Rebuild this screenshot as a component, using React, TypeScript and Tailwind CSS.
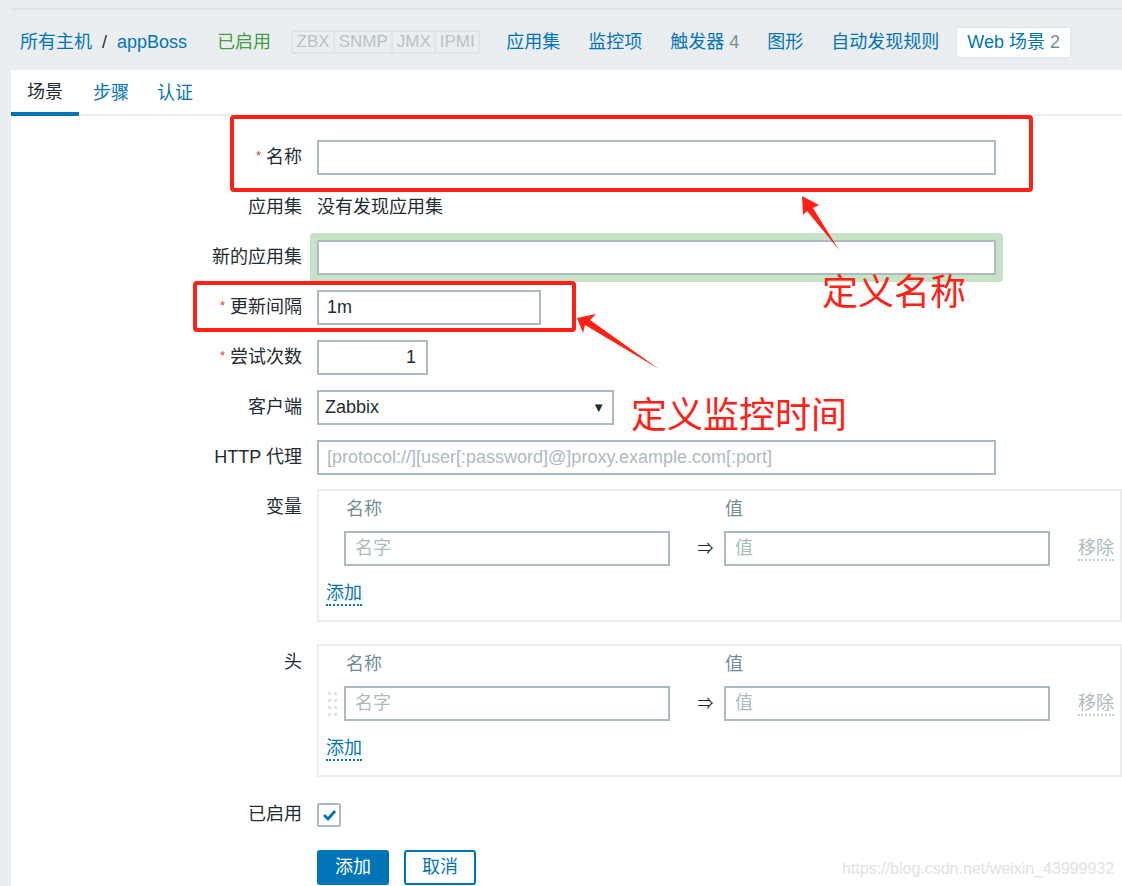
import React from 'react';

const FONT = "font-['Liberation_Sans','Noto_Sans_CJK_SC',sans-serif]";

function Label({ text, required }: { text: string; required?: boolean }) {
  return (
    <div className="w-[291px] shrink-0 flex justify-end items-center text-[#1f2c33]">
      {required && <span className="text-[#e33734] text-[13px] mr-[5px] -mt-[4px]">*</span>}
      <span>{text}</span>
    </div>
  );
}

function Row({ label, required, children, className = '' }: { label: string; required?: boolean; children: React.ReactNode; className?: string }) {
  return (
    <div className={`flex items-center h-[35px] gap-[15px] ${className}`}>
      <Label text={label} required={required} />
      {children}
    </div>
  );
}

function DragHandle() {
  return (
    <svg width="10" height="28" viewBox="0 0 10 28">
      {[0, 1, 2, 3].map((r) =>
        [0, 1].map((c) => <rect key={`${r}-${c}`} x={c * 6} y={r * 7 + 2} width="3" height="3" fill="#dfe4e7" />)
      )}
    </svg>
  );
}

function PairBox({ handle }: { handle?: boolean }) {
  return (
    <div className="w-[830px] border-2 border-[#ebeef0]">
      <div className="flex h-[36px] items-center pl-[25px] text-[#768d99]">
        <div className="w-[326px] pl-[2px]">名称</div>
        <div className="w-[54px]" />
        <div className="pl-[1px]">值</div>
      </div>
      <div className="flex h-[35px] items-center mt-[4px]">
        <div className="w-[25px] flex justify-center pl-[2px]">{handle && <DragHandle />}</div>
        <div className="w-[326px] h-[35px] border-2 border-[#acbbc2] flex items-center px-[9px] text-[#acbbc2]">名字</div>
        <div className="w-[54px] text-center pl-[17px] text-[#1f2c33] text-[16px]">⇒</div>
        <div className="w-[326px] h-[35px] border-2 border-[#acbbc2] flex items-center px-[9px] text-[#acbbc2]">值</div>
        <span className="ml-[28px] text-[#acbbc2] border-b-2 border-dotted border-[#c4cfd4] leading-[22px]">移除</span>
      </div>
      <div className="h-[30px] mt-[13px] mb-[11px] pl-[7px] flex items-center">
        <span className="text-[#0275b8] border-b-2 border-dotted border-[#0275b8] leading-[22px]">添加</span>
      </div>
    </div>
  );
}

export default function App() {
  return (
    <div className={`relative w-[1122px] h-[886px] overflow-hidden bg-[#ebeef0] text-[18px] ${FONT}`}>
      <div className="h-[8px]" />
      {/* host nav */}
      <div className="ml-[10px] border-t-2 border-[#dfe4e7] h-[62px] pt-[4px] flex items-center pl-[10px] text-[#0275b8] whitespace-nowrap">
        <span>所有主机</span>
        <span className="ml-[10px] text-[#1f2c33]">/</span>
        <span className="ml-[10px]">appBoss</span>
        <span className="ml-[30px] text-[#429e47]">已启用</span>
        <div className="ml-[20px] flex border-2 border-[#dfe4e7] rounded-[3px] text-[#b8c3c8] text-[17px] leading-[20px]">
          <span className="px-[3.5px] border-r-2 border-[#dfe4e7]">ZBX</span>
          <span className="px-[3.5px] border-r-2 border-[#dfe4e7]">SNMP</span>
          <span className="px-[3.5px] border-r-2 border-[#dfe4e7]">JMX</span>
          <span className="px-[3.5px]">IPMI</span>
        </div>
        <span className="ml-[26px]">应用集</span>
        <span className="ml-[28px]">监控项</span>
        <span className="ml-[28px]">触发器 <span className="text-[#768d99]">4</span></span>
        <span className="ml-[28px]">图形</span>
        <span className="ml-[28px]">自动发现规则</span>
        <div className="ml-[17px] h-[31px] px-[10px] flex items-center bg-white border border-[#dfe4e7] rounded-[2px]">
          Web 场景 <span className="ml-[5px] text-[#768d99]">2</span>
        </div>
      </div>

      {/* white panel */}
      <div className="ml-[11px] bg-white h-[816px]">
        <div className="flex h-[46px] border-b-2 border-[#ebeef0]">
          <div className="px-[16px] pt-[3px] flex items-center text-[#1f2c33] border-b-4 border-[#0275b8] -mb-[2px]">场景</div>
          <div className="px-[14px] pt-[3px] flex items-center text-[#0275b8]">步骤</div>
          <div className="px-[14px] pt-[3px] flex items-center text-[#0275b8]">认证</div>
        </div>

        <div className="pt-[24px] flex flex-col gap-[15px]">
          <Row label="名称" required>
            <div className="w-[679px] h-[35px] border-2 border-[#acbbc2]" />
          </Row>
          <Row label="应用集">
            <span className="text-[#1f2c33]">没有发现应用集</span>
          </Row>
          <Row label="新的应用集">
            <div className="w-[679px] h-[35px] border-2 border-[#acbbc2] shadow-[0_0_0_7px_#c6e3c8] rounded-[1px]" />
          </Row>
          <Row label="更新间隔" required>
            <div className="w-[224px] h-[35px] border-2 border-[#acbbc2] flex items-center px-[8px] text-[#1f2c33]">1m</div>
          </Row>
          <Row label="尝试次数" required>
            <div className="w-[111px] h-[35px] border-2 border-[#acbbc2] flex items-center justify-end px-[10px] text-[#1f2c33]">1</div>
          </Row>
          <Row label="客户端">
            <div className="w-[297px] h-[35px] border-2 border-[#acbbc2] flex items-center justify-between pl-[6px] pr-[7px] text-[#1f2c33]">
              <span>Zabbix</span>
              <span className="text-[13px]">▼</span>
            </div>
          </Row>
          <Row label="HTTP 代理">
            <div className="w-[679px] h-[35px] border-2 border-[#acbbc2] flex items-center px-[8px] text-[#acbbc2] whitespace-nowrap">
              [protocol://][user[:password]@]proxy.example.com[:port]
            </div>
          </Row>
        </div>

        <div className="flex gap-[15px] mt-[14px]">
          <div className="w-[291px] shrink-0 text-right pt-[7px] text-[#1f2c33] leading-[22px]">变量</div>
          <PairBox />
        </div>
        <div className="flex gap-[15px] mt-[22px]">
          <div className="w-[291px] shrink-0 text-right pt-[7px] text-[#1f2c33] leading-[22px]">头</div>
          <PairBox handle />
        </div>

        <div className="flex items-center gap-[15px] mt-[20px] h-[35px]">
          <Label text="已启用" />
          <div className="w-[24px] h-[24px] border-2 border-[#acbbc2] rounded-[2px] flex items-center justify-center">
            <svg width="15" height="12" viewBox="0 0 15 12">
              <path d="M2 6 L6 10 L13 2" stroke="#0275b8" strokeWidth="2.8" fill="none" />
            </svg>
          </div>
        </div>

        <div className="flex gap-[15px] mt-[18px] ml-[306px]">
          <div className="w-[72px] h-[35px] bg-[#0275b8] text-white rounded-[3px] flex items-center justify-center">添加</div>
          <div className="w-[72px] h-[35px] border-2 border-[#0275b8] text-[#0275b8] rounded-[3px] flex items-center justify-center">取消</div>
        </div>
      </div>

      {/* annotations */}
      <div className="absolute left-[230px] top-[115px] w-[803px] h-[77px] border-[4px] border-[#ff2016] rounded-[4px]" />
      <div className="absolute left-[193px] top-[281px] w-[383px] h-[51px] border-[4px] border-[#ff2016] rounded-[4px]" />
      <svg className="absolute left-0 top-0" width="1122" height="886" viewBox="0 0 1122 886">
        <polygon points="802,196 819,205 813,208 839,250 807,211 803,215" fill="#ff2016" />
        <polygon points="577,318 596,314 590,320 659,369 585,325 583,333" fill="#ff2016" />
      </svg>
      <div className="absolute left-[822px] top-[268px] text-[36px] leading-[42px] text-[#ff2016] font-['Noto_Sans_CJK_SC',sans-serif]">定义名称</div>
      <div className="absolute left-[631px] top-[391px] text-[36px] leading-[42px] text-[#ff2016] font-['Noto_Sans_CJK_SC',sans-serif]">定义监控时间</div>
      <div className="absolute left-[842px] top-[857px] text-[16px] text-[#e2e2e2] whitespace-nowrap">https://blog.csdn.net/weixin_43999932</div>
    </div>
  );
}
